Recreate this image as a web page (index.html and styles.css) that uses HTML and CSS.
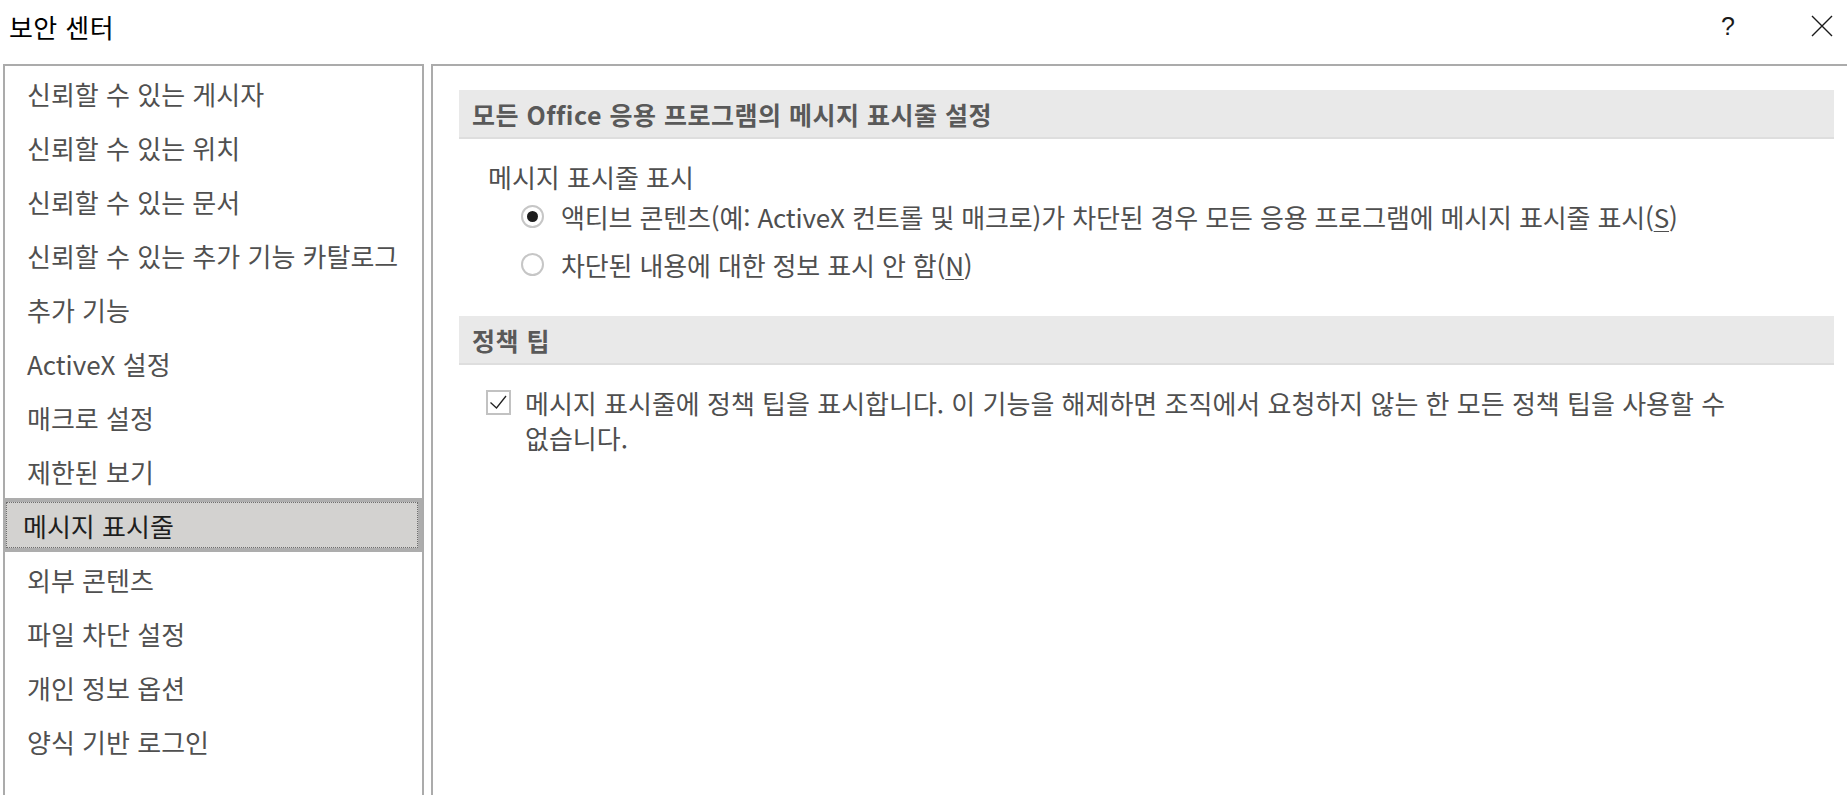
FILE: index.html
```html
<!DOCTYPE html>
<html lang="ko">
<head>
<meta charset="utf-8">
<title>보안 센터</title>
<link rel="stylesheet" href="styles.css">
</head>
<body>
<div class="window">
  <div class="titlebar">
    <div class="title">보안 센터</div>
    <div class="title-actions">
      <span class="help">?</span>
      <svg class="close" width="22" height="22" viewBox="0 0 22 22"><path d="M1 1 L21 21 M21 1 L1 21" stroke="#1a1a1a" stroke-width="1.4" fill="none"/></svg>
    </div>
  </div>
  <div class="main">
    <ul class="nav">
      <li class="nav-item">신뢰할 수 있는 게시자</li>
      <li class="nav-item">신뢰할 수 있는 위치</li>
      <li class="nav-item">신뢰할 수 있는 문서</li>
      <li class="nav-item">신뢰할 수 있는 추가 기능 카탈로그</li>
      <li class="nav-item">추가 기능</li>
      <li class="nav-item">ActiveX 설정</li>
      <li class="nav-item">매크로 설정</li>
      <li class="nav-item">제한된 보기</li>
      <li class="nav-item selected"><span class="sel-inner">메시지 표시줄</span></li>
      <li class="nav-item">외부 콘텐츠</li>
      <li class="nav-item">파일 차단 설정</li>
      <li class="nav-item">개인 정보 옵션</li>
      <li class="nav-item">양식 기반 로그인</li>
    </ul>
    <div class="content">
      <div class="section-head">모든 Office 응용 프로그램의 메시지 표시줄 설정</div>
      <div class="group-label">메시지 표시줄 표시</div>
      <div class="radio-row">
        <span class="radio checked"></span>
        <span class="opt-text">액티브 콘텐츠(예: ActiveX 컨트롤 및 매크로)가 차단된 경우 모든 응용 프로그램에 메시지 표시줄 표시(<u>S</u>)</span>
      </div>
      <div class="radio-row">
        <span class="radio"></span>
        <span class="opt-text">차단된 내용에 대한 정보 표시 안 함(<u>N</u>)</span>
      </div>
      <div class="section-head second">정책 팁</div>
      <div class="check-row">
        <span class="checkbox"><svg width="21" height="21" viewBox="0 0 21 21"><path d="M2.5 10.5 L8.5 16 L18 4" stroke="#222" stroke-width="1.3" fill="none"/></svg></span>
        <span class="check-text">메시지 표시줄에 정책 팁을 표시합니다. 이 기능을 해제하면 조직에서 요청하지 않는 한 모든 정책 팁을 사용할 수 없습니다.</span>
      </div>
    </div>
  </div>
</div>
</body>
</html>
```
FILE: styles.css
```css
html, body {
  margin: 0;
  padding: 0;
  background: #ffffff;
}
body {
  font-family: "Noto Sans CJK KR", "Noto Sans", "Liberation Sans", sans-serif;
  color: #4f4f4f;
  overflow: hidden;
}
.window {
  width: 1847px;
  height: 795px;
  display: flex;
  flex-direction: column;
}
.titlebar {
  height: 64px;
  display: flex;
  align-items: center;
  justify-content: space-between;
  padding: 0 14px 0 9px;
  box-sizing: border-box;
}
.title {
  font-size: 26px;
  letter-spacing: 0.4px;
  color: #000;
  margin-top: -12px;
}
.title-actions {
  display: flex;
  align-items: center;
  gap: 76px;
  margin-top: -12px;
}
.help {
  font-family: "Liberation Sans", sans-serif;
  font-size: 25px;
  color: #1a1a1a;
}
.close {
  display: block;
}
.main {
  flex: 1;
  display: flex;
  gap: 7px;
  padding-left: 3px;
  min-height: 0;
}
.nav {
  list-style: none;
  margin: 0;
  padding: 0;
  width: 417px;
  border: 2px solid #ababab;
  border-bottom: none;
  flex: none;
}
.nav-item {
  height: 54px;
  display: flex;
  align-items: center;
  padding-left: 22px;
  font-size: 26px;
  color: #505050;
  white-space: nowrap;
  box-sizing: border-box;
}
.nav-item.selected {
  padding: 4px 4px 4px 3px;
  margin-left: -2px;
  background: #adadad;
  color: #1e1e1e;
}
.sel-inner {
  flex: 1;
  height: 100%;
  display: flex;
  align-items: center;
  padding-left: 16px;
  background: #d3d2d0;
  border: 1px dotted #6e6e6e;
  box-sizing: border-box;
}
.content {
  flex: 1;
  border-top: 2px solid #ababab;
  border-left: 2px solid #ababab;
  padding: 24px 13px 0 26px;
  min-width: 0;
}
.section-head {
  height: 49px;
  background: #e9e9e9;
  border-bottom: 2px solid #dedede;
  box-sizing: border-box;
  display: flex;
  align-items: center;
  padding-left: 13px;
  font-size: 25px;
  letter-spacing: 0.5px;
  font-weight: bold;
  color: #595959;
}
.section-head.second {
  margin-top: 28px;
}
.group-label {
  margin-top: 23px;
  height: 30px;
  line-height: 30px;
  padding-left: 29px;
  font-size: 26px;
}
.radio-row {
  height: 48px;
  display: flex;
  align-items: center;
  padding-left: 62px;
  gap: 17px;
  font-size: 26px;
  letter-spacing: -0.15px;
  white-space: nowrap;
}
.radio {
  width: 23px;
  height: 23px;
  border: 2px solid #c6c6c6;
  border-radius: 50%;
  box-sizing: border-box;
  display: flex;
  align-items: center;
  justify-content: center;
  flex: none;
}
.radio.checked::after {
  content: "";
  width: 11px;
  height: 11px;
  border-radius: 50%;
  background: #1e1e1e;
}
.opt-text u {
  text-decoration-thickness: 1px;
  text-underline-offset: 3px;
}
.check-row {
  margin-top: 20px;
  display: flex;
  align-items: flex-start;
  padding-left: 27px;
  gap: 14px;
  font-size: 26px;
  line-height: 35px;
}
.checkbox {
  width: 25px;
  height: 25px;
  border: 2px solid #c2c2c2;
  box-sizing: border-box;
  display: flex;
  align-items: center;
  justify-content: center;
  margin-top: 5px;
  flex: none;
}
.check-text {
  max-width: 1250px;
  word-break: keep-all;
}
```
